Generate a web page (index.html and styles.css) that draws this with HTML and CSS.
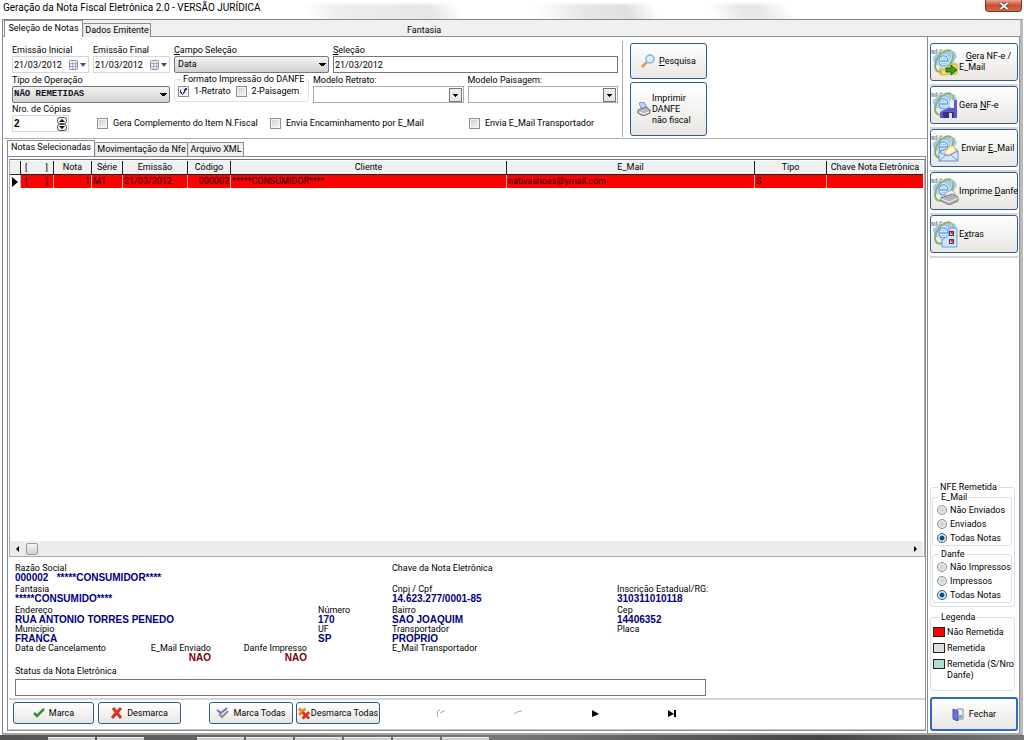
FILE: index.html
```html
<!DOCTYPE html>
<html lang="pt-BR">
<head>
<meta charset="utf-8">
<title>Geração da Nota Fiscal Eletrônica 2.0</title>
<link rel="stylesheet" href="styles.css">
</head>
<body>
<svg class="defs" aria-hidden="true">
  <symbol id="nfe" viewBox="0 0 28 28">
    <path d="M2 9l6-5 5 1 5-3 6 2 2 5-3 4 1 5-4 4-4-1-4 2-4-5-4-2-2-4z" fill="#a2cbf2"/>
    <path d="M1 6V2l2 4V2M5 6V2h2M5 4h2M9 5V2h2v1M13 4h2" stroke="#8a9098" fill="none"/>
    <path d="M9 13h8c0-7-9-7-9 0 0 6 7 6 9 3" fill="none" stroke="#fff" stroke-width="3"/>
    <path d="M9 13h8c0-7-9-7-9 0 0 6 7 6 9 3" fill="none" stroke="#5aa2e2" stroke-width="1.500"/>
    <ellipse cx="13" cy="13" rx="7" ry="12" transform="rotate(35 13 13)" fill="none" stroke="#8db06c" stroke-width="2"/>
    <path d="M20 3c3 4-1 13-9 18" fill="none" stroke="#d8e4c4"/>
  </symbol>
  <symbol id="cal" viewBox="0 0 20 12">
    <rect x="1.500" y="1.500" width="8" height="9" rx="1" fill="#eef" stroke="#8b8fa3"/>
    <path d="M2 4.500h7M2 7.500h7M4.500 3v7M7.500 3v7" stroke="#a9adc2"/>
    <path d="M12 4h6l-3 4z" fill="#35598f"/>
  </symbol>
</svg>
<header class="titlebar">
  <h1 class="title">Geração da Nota Fiscal Eletrônica 2.0 - VERSÃO JURÍDICA</h1>
  <button class="close" aria-label="Fechar janela"><svg width="10" height="8" viewBox="0 0 10 8"><path d="M1.500 1l7 6M8.500 1l-7 6" stroke="#6b2b25" stroke-width="3.500"/><path d="M1.500 1l7 6M8.500 1l-7 6" stroke="#fff" stroke-width="2"/></svg></button>
</header>
<main class="window">
  <nav class="tabs top-tabs">
    <button class="tab active">Seleção de Notas</button>
    <button class="tab">Dados Emitente</button>
    <span class="company">Fantasia</span>
  </nav>
  <div class="page">
    <div class="work">
      <section class="filters">
        <form class="form">
          <div class="row">
            <div class="field date"><label for="ini">Emissão Inicial</label><div class="box soft"><input id="ini" value="21/03/2012"><svg width="20" height="12"><use href="#cal"/></svg></div></div>
            <div class="field date"><label for="fim">Emissão Final</label><div class="box soft"><input id="fim" value="21/03/2012"><svg width="20" height="12"><use href="#cal"/></svg></div></div>
            <div class="field campo"><label for="campo"><u>C</u>ampo Seleção</label><select id="campo" class="combo"><option>Data</option></select></div>
            <div class="field grow"><label for="sel"><u>S</u>eleção</label><div class="box dark"><input id="sel" value="21/03/2012"></div></div>
          </div>
          <div class="row second">
            <div class="field tipo"><label for="tipo">Tipo de Operação</label><select id="tipo" class="combo mono"><option>NÃO REMETIDAS</option></select></div>
            <fieldset class="group formato"><legend>Formato Impressão do DANFE</legend>
              <label class="opt"><input type="checkbox" class="check" checked>1-Retrato</label>
              <label class="opt"><input type="checkbox" class="check">2-Paisagem</label>
            </fieldset>
            <div class="field grow"><label for="mr">Modelo Retrato:</label><select id="mr" class="combo plain"><option></option></select></div>
            <div class="field grow"><label for="mp">Modelo Paisagem:</label><select id="mp" class="combo plain"><option></option></select></div>
          </div>
          <div class="row third">
            <div class="field copias"><label for="cop">Nro. de Cópias</label><div class="box soft"><input id="cop" class="bold" value="2"><svg width="12" height="14" viewBox="0 0 12 14"><rect x="1.500" y=".5" width="9" height="6" rx="2" fill="#eee" stroke="#555"/><rect x="1.500" y="7.500" width="9" height="6" rx="2" fill="#eee" stroke="#555"/><path d="M3 5h6l-3-3zM3 9h6l-3 3z" fill="#111"/></svg></div></div>
            <label class="opt c1"><input type="checkbox" class="check">Gera Complemento do Item N.Fiscal</label>
            <label class="opt c2"><input type="checkbox" class="check">Envia Encaminhamento por E_Mail</label>
            <label class="opt"><input type="checkbox" class="check">Envia E_Mail Transportador</label>
          </div>
        </form>
        <div class="actions">
          <button class="btn search"><svg width="14" height="14" viewBox="0 0 14 14"><path d="M1 13l5-5" stroke="#e59a4a" stroke-width="2.500"/><circle cx="9" cy="5" r="4" fill="#d8f0ff" stroke="#7fb2e2" stroke-width="1.500"/></svg><span><u>P</u>esquisa</span></button>
          <button class="btn print"><svg width="14" height="14" viewBox="0 0 14 14"><path d="M2 1l5-1 3 6-5 2z" fill="#b9d4f8" stroke="#8295c2"/><path d="M1 8l8-3 4 3v3l-7 3-5-3z" fill="#b8bcc2" stroke="#65686e"/><path d="M2 10l5 2 5-2" stroke="#fff" fill="none"/></svg><span>Imprimir<br>DANFE<br>não fiscal</span></button>
        </div>
      </section>
      <nav class="tabs sub-tabs">
        <button class="tab active">Notas Selecionadas</button>
        <button class="tab">Movimentação da Nfe</button>
        <button class="tab">Arquivo XML</button>
      </nav>
      <section class="notes">
        <div class="gridbox">
          <table class="grid">
            <colgroup><col class="w11"><col class="w33"><col class="w38"><col class="w31"><col class="w65"><col class="w43"><col><col class="w248"><col class="w72"><col class="w96"></colgroup>
            <thead><tr><th></th><th><span class="br"><span>[</span><span>]</span></span></th><th>Nota</th><th>Série</th><th>Emissão</th><th>Código</th><th>Cliente</th><th>E_Mail</th><th>Tipo</th><th>Chave Nota Eletrônica</th></tr></thead>
            <tbody><tr><td class="mark"><svg width="6" height="10" viewBox="0 0 6 10"><path d="M0 0l6 5-6 5z"/></svg></td><td><span class="br"><span>[</span><span>]</span></span></td><td class="num">1</td><td>M1</td><td>21/03/2012</td><td class="num">000002</td><td>*****CONSUMIDOR****</td><td>nativashoes@ymail.com</td><td>S</td><td></td></tr></tbody>
          </table>
          <div class="scroll"><svg width="5" height="8" viewBox="0 0 5 8"><path d="M4 1v6L1 4z"/></svg><span class="thumb"></span><svg width="5" height="8" viewBox="0 0 5 8"><path d="M1 1v6l3-3z"/></svg></div>
        </div>
        <div class="details">
          <div class="cell wide3">Razão Social<b>000002 &nbsp; *****CONSUMIDOR****</b></div>
          <div class="cell wide3 col4">Chave da Nota Eletrônica</div>
          <div class="cell wide3">Fantasia<b>*****CONSUMIDO****</b></div>
          <div class="cell col5">Cnpj / Cpf<b>14.623.277/0001-85</b></div>
          <div class="cell">Inscrição Estadual/RG:<b>310311010118</b></div>
          <div class="cell wide3">Endereço<b>RUA ANTONIO TORRES PENEDO</b></div>
          <div class="cell">Número<b>170</b></div>
          <div class="cell">Bairro<b>SAO JOAQUIM</b></div>
          <div class="cell">Cep<b>14406352</b></div>
          <div class="cell wide3">Município<b>FRANCA</b></div>
          <div class="cell">UF<b>SP</b></div>
          <div class="cell">Transportador<b>PROPRIO</b></div>
          <div class="cell">Placa</div>
          <div class="cell">Data de Cancelamento</div>
          <div class="cell end">E_Mail Enviado<b class="no">NAO</b></div>
          <div class="cell end danfe">Danfe Impresso<b class="no">NAO</b></div>
          <div class="cell col5">E_Mail Transportador</div>
        </div>
        <div class="status"><label for="st">Status da Nota Eletrônica</label><div class="box dark"><input id="st"></div></div>
        <div class="toolbar">
          <button class="btn b1"><svg width="12" height="10" viewBox="0 0 12 10"><path d="M1 5l3 3 7-7" fill="none" stroke="#2c9431" stroke-width="2.500"/></svg>Marca</button>
          <button class="btn b2"><svg width="12" height="12" viewBox="0 0 12 12"><path d="M2 1l8 10M10 1L1 11" stroke="#d93120" stroke-width="3"/></svg>Desmarca</button>
          <button class="btn b3"><svg width="13" height="12" viewBox="0 0 13 12"><path d="M1 3l4 3 6-5" fill="none" stroke="#6d70d8" stroke-width="2"/><path d="M3 7l3 3 6-6" fill="none" stroke="#8a8d94" stroke-width="2"/></svg>Marca Todas</button>
          <button class="btn b4"><svg width="12" height="13" viewBox="0 0 13 13"><path d="M1 1l7 8M8 1L1 8" stroke="#ef8a22" stroke-width="3"/><path d="M5 5l7 7M12 5l-7 7" stroke="#d93120" stroke-width="3"/></svg>Desmarca Todas</button>
          <div class="pager">
            <button class="nav" aria-label="Primeiro" disabled><svg width="10" height="9" viewBox="0 0 10 9"><path d="M1.500 8V2M2 1.500h2M4 4l5-2.500" fill="none" stroke="#aaa"/></svg></button>
            <button class="nav" aria-label="Anterior" disabled><svg width="10" height="9" viewBox="0 0 10 9"><path d="M1 5l3-2 5-1" fill="none" stroke="#aaa"/></svg></button>
            <button class="nav" aria-label="Próximo"><svg width="10" height="9" viewBox="0 0 10 9"><path d="M2 1l7 4-7 3z"/></svg></button>
            <button class="nav" aria-label="Último"><svg width="10" height="9" viewBox="0 0 10 9"><path d="M1 1l6 4-6 3zM7 1h2v7H7z"/></svg></button>
          </div>
        </div>
      </section>
    </div>
    <aside class="side">
      <div class="slot"><button class="btn big"><svg width="28" height="28" viewBox="0 0 28 28"><path d="M9 17l7-2 10 1v10l-17 1z" fill="#f7dc62" stroke="#e0b93c"/><use href="#nfe"/><path d="M10 22l5-1 4-4 7-1v10l-15 1z" fill="#f7dc62" stroke="#e0b93c"/><path d="M15 20h5v-3l6 5-6 5v-3h-5z" fill="#3a9d2c" stroke="#1c6817"/></svg><span>&nbsp; &nbsp;<u>G</u>era NF-e /<br>E_Mail</span></button></div>
      <div class="slot"><button class="btn big"><svg width="28" height="28" viewBox="0 0 28 28"><use href="#nfe"/><path d="M19 9h7v18H9v-6l10-5z" fill="#5a5bc6"/><path d="M19 9h4v8h-4z" fill="#e8eaf8"/><path d="M12 21h11v6H12z" fill="#34367c"/><path d="M18 22h3v5h-3z" fill="#dde"/></svg><span>Gera <u>N</u>F-e</span></button></div>
      <div class="slot"><button class="btn big"><svg width="28" height="28" viewBox="0 0 28 28"><use href="#nfe"/><path d="M8 18l14-6 5 5v10H8z" fill="#d8e8fc" stroke="#6e8bd0"/><path d="M19 12h4l2 5-7 4-5-2z" fill="#fff3c4" stroke="#e2c47a"/><path d="M8 18l9 4 10-5M8 27l7-6M27 27l-7-6" fill="none" stroke="#6e8bd0"/></svg><span>&nbsp;Enviar <u>E</u>_Mail</span></button></div>
      <div class="slot"><button class="btn big"><svg width="28" height="28" viewBox="0 0 28 28"><use href="#nfe"/><path d="M14 16l7-3 4 5-9 4z" fill="#eef2f7" stroke="#aaa"/><path d="M10 21l11-4 6 3v4l-9 4-8-4z" fill="#b5b5b5" stroke="#777"/><path d="M10 22l8 3 9-4" fill="none" stroke="#eee"/></svg><span>Imprime <u>D</u>anfe</span></button></div>
      <div class="slot"><button class="btn big"><svg width="28" height="28" viewBox="0 0 28 28"><use href="#nfe"/><path d="M11 20l7-5V8h8v19H11z" fill="#cce4ff" stroke="#6b9ae0"/><path d="M18.500 11.500h4v4h-4zM18.500 19.500h4v4h-4z" fill="#f8ded8" stroke="#333"/><path d="M20 12l2 2M20 20l2 2" stroke="#d52c20" stroke-width="2"/></svg><span>E<u>x</u>tras</span></button></div>
      <fieldset class="group outer"><legend>NFE Remetida</legend>
        <fieldset class="group radios"><legend>E_Mail</legend>
          <label><input type="radio" name="em">Não Enviados</label>
          <label><input type="radio" name="em">Enviados</label>
          <label><input type="radio" name="em" checked>Todas Notas</label>
        </fieldset>
        <fieldset class="group radios"><legend>Danfe</legend>
          <label><input type="radio" name="da">Não Impressos</label>
          <label><input type="radio" name="da">Impressos</label>
          <label><input type="radio" name="da" checked>Todas Notas</label>
        </fieldset>
      </fieldset>
      <fieldset class="group legenda"><legend>Legenda</legend>
        <div class="key"><i class="sw red"></i>Não Remetida</div>
        <div class="key"><i class="sw gray"></i>Remetida</div>
        <div class="key"><i class="sw teal"></i><span>Remetida (S/Nro<br>Danfe)</span></div>
      </fieldset>
      <button class="btn exit"><svg width="12" height="13" viewBox="0 0 12 13"><path d="M5 1h6v10H5z" fill="#eaf2ff" stroke="#7a7fd0"/><path d="M1 1l5 2v10l-5-2z" fill="#6f73d9" stroke="#4a4eb0"/><path d="M7 7h3v3H7z" fill="#7bc24a"/></svg>Fechar</button>
    </aside>
  </div>
</main>
<footer class="taskbar"><i class="task"></i><i class="task"></i><i class="task gap"></i><i class="task"></i><i class="task"></i><i class="task"></i><i class="task"></i><i class="task"></i></footer>
</body>
</html>
```
FILE: styles.css
```css
* { box-sizing: border-box; }
body {
  margin: 0;
  min-height: 100vh;
  display: flex;
  flex-direction: column;
  background: #fff;
  color: #000;
  font: 9px/11px Roboto, "Liberation Sans", sans-serif;
}
button, input, select { font: inherit; color: inherit; margin: 0; }
.defs { position: absolute; width: 0; height: 0; }
.titlebar {
  height: 19px;
  flex: none;
  display: flex;
  justify-content: space-between;
  align-items: flex-start;
  padding-right: 2px;
  background: linear-gradient(#fff 2px, transparent 6px), linear-gradient(60deg, #fff 30%, #eee 33%, #e6e6e6 42%, #fff 45%, #fff 52%, #e6e6e6 57%, #e0e0e0 61%, #fff 64%, #fff 69%, #e8e8e8 72%, #e8e8e8 74%, #fff 77%, #fff 100%);
}
.title { margin: 0; padding: 1px 3px; font: 10px/14px Roboto, "Open Sans", sans-serif; }
.close {
  width: 37px;
  height: 12px;
  padding: 0;
  border: 1px solid #7a3027;
  border-top: 0;
  border-radius: 0 0 4px 4px;
  background: linear-gradient(#e6a796, #cd4c33 50%, #d9694d);
  display: grid;
  place-items: center;
}
.window {
  flex: 1;
  display: flex;
  flex-direction: column;
  margin: 0 1px 0 2px;
  border: 1px solid #85858c;
  border-bottom: 2px solid #a5a5a8;
  border-right: 3px solid #b9b9bc;
}
.tabs { display: flex; align-items: flex-end; flex: none; }
.tab {
  padding: 0;
  border: 1px solid #898c95;
  border-left-color: #ddd;
  border-bottom: 0;
  background: #f0f0f0;
  height: 14px;
  white-space: nowrap;
}
.tab.active { background: #fff; border-left-color: #898c95; }
.top-tabs { height: 17px; background: #f0f0f0; box-shadow: inset 0 -1px #898c95; padding-left: 1px; }
.top-tabs .tab { width: 68px; }
.top-tabs .active { width: 79px; height: 17px; padding-bottom: 2px; }
.company { margin-left: 256px; align-self: center; padding-top: 4px; }
.page { flex: 1; display: flex; border-right: 1px solid #898c95; }
.work { flex: 1; min-width: 0; display: flex; flex-direction: column; padding-left: 1px; }
.filters { display: flex; height: 102px; padding-top: 4px; border-bottom: 1px solid #ababab; }
.form { width: 619px; padding: 4px 4px 0 8px; border-right: 1px solid #aaa; margin-bottom: 1px; }
.row { display: flex; height: 28px; gap: 4px; }
.second { margin-top: 1px; height: 29px; align-items: flex-end; }
.third { margin-top: 1px; height: 30px; }
.field { display: flex; flex-direction: column; white-space: nowrap; }
.date { width: 77px; }
.campo { width: 155px; }
.tipo { width: 158px; }
.grow { flex: 1; }
.box { display: flex; align-items: center; height: 17px; border: 1px solid #d5d5dc; background: #fff; }
.box input { flex: 1; min-width: 0; width: 10px; border: 0; padding: 0 0 0 1px; background: none; outline: 0; height: 13px; }
.dark { border-color: #777; }
.box .bold { font: bold 10px/11px "Liberation Sans", sans-serif; }
.combo {
  appearance: none;
  width: 100%;
  height: 17px;
  padding: 0 3px;
  border: 1px solid #777;
  border-radius: 2px;
  background-image: linear-gradient(#000, #000), linear-gradient(#000, #000), linear-gradient(#000, #000), linear-gradient(#f3f3f3, #d2d2d2);
  background-size: 7px 1px, 5px 1px, 3px 1px, 100% 100%;
  background-position: right 2px top 6px, right 3px top 7px, right 4px top 8px, 0 0;
  background-repeat: no-repeat;
}
.mono { font: bold 9px/11px "Liberation Mono", monospace; color: #112; padding: 0 1px; }
.plain {
  border-color: #aaa;
  border-radius: 0;
  background-image: linear-gradient(#000, #000), linear-gradient(#000, #000), linear-gradient(#000, #000), linear-gradient(#eee, #e4e4e4), linear-gradient(#777, #777);
  background-color: #fff;
  background-size: 5px 1px, 3px 1px, 1px 1px, 11px 12px, 13px 14px;
  background-position: right 5px top 7px, right 6px top 8px, right 7px top 9px, right 2px top 2px, right 1px top 1px;
}
.group { margin: 0; padding: 0; border: 1px solid #d5dfe5; border-radius: 3px; min-width: 0; }
.group legend { padding: 0 2px; margin-left: 6px; white-space: nowrap; }
.formato { width: 135px; height: 28px; padding-left: 3px; display: flex; gap: 5px; margin-bottom: 1px; }
.formato legend { margin-left: 3px; }
.opt { display: flex; align-items: center; gap: 5px; white-space: nowrap; }
.formato .opt { height: 13px; }
.check { appearance: none; width: 11px; height: 11px; flex: none; border: 1px solid #8e8f8f; background: linear-gradient(135deg, #ccd0d4, #f6f6f6); box-shadow: inset 0 0 0 1px #f4f4f4; }
.check:checked { background: conic-gradient(from 20deg at 40% 85%, #31347c 22deg, transparent 0 285deg, #31347c 0 315deg, transparent 0), #e8ebf4; }
.copias { width: 57px; }
.third .opt { padding-top: 8px; }
.c1 { margin-left: 24px; width: 169px; }
.c2 { width: 195px; }
.actions { display: flex; flex-direction: column; gap: 3px; width: 84px; padding: 2px 0 2px 7px; }
.btn {
  display: flex;
  align-items: center;
  justify-content: center;
  gap: 4px;
  padding: 0;
  border: 1px solid #2c5b92;
  border-radius: 3px;
  background: linear-gradient(#fff, #f4f3f1 50%, #e9e6e3);
  white-space: nowrap;
}
.btn svg { flex: none; }
.search { height: 36px; }
.print { height: 54px; text-align: left; justify-content: flex-start; padding-left: 6px; gap: 1px; }
.sub-tabs { height: 16px; margin: 1px 0 0 3px; }
.sub-tabs .tab { width: 93px; }
.sub-tabs .active { width: 88px; height: 16px; padding-bottom: 2px; }
.sub-tabs .tab:last-child { width: 56px; }
.notes { flex: 1; display: flex; flex-direction: column; margin: 0 1px 2px 3px; border: 1px solid #898c95; padding: 2px 0 0 1px; }
.gridbox { flex: 1; display: flex; flex-direction: column; border: 1px solid #aaa; border-top-color: #777; min-height: 380px; padding: 1px 1px 0 0; }
.grid { width: 100%; table-layout: fixed; border-collapse: separate; border-spacing: 0; white-space: nowrap; }
.grid th, .grid td { height: 13px; padding: 0 1px; overflow: hidden; font-weight: normal; text-align: left; border-right: 1px solid #b5b5b5; }
.grid th { background: #f0f0f0; text-align: center; height: 14px; border-right-color: #222; border-bottom: 1px solid #222; }
.grid th:last-child, .grid td:last-child { border-right: 0; }
.grid td { background: #f00; color: #100000; }
.grid td.mark { background: #fff; padding: 0 2px; }
.grid .num { text-align: right; }
.mark svg { display: block; }
.br { display: flex; justify-content: space-between; padding: 0 4px 0 3px; }
.w11 { width: 11px; } .w33 { width: 33px; } .w38 { width: 38px; } .w31 { width: 31px; } .w65 { width: 65px; }
.w43 { width: 43px; } .w248 { width: 248px; } .w72 { width: 72px; } .w96 { width: 96px; }
.scroll { margin-top: auto; height: 15px; display: flex; align-items: center; gap: 6px; padding: 0 5px; background: #ececec; }
.thumb { width: 12px; height: 12px; border: 1px solid #999; border-radius: 2px; background: linear-gradient(#f5f5f5, #d0d0d0); margin-right: auto; }
.details {
  display: grid;
  grid-template-columns: 130px 66px 107px 74px 225px 1fr;
  grid-template-rows: 21px 21px 19px 19px 23px;
  padding: 6px 0 0 6px;
  line-height: 10px;
}
.cell { white-space: nowrap; }
.cell b { display: block; font: bold 10px/9px "Liberation Sans", sans-serif; color: #000080; }
.cell .no { color: #800000; }
.wide3 { grid-column: 1 / span 3; }
.col4 { grid-column: 5 / span 2; }
.col5 { grid-column: 5; }
.end { text-align: right; }
.danfe { padding-right: 11px; }
.status { width: 697px; padding: 0 0 2px 6px; }
.status label { display: block; height: 13px; }
.toolbar { display: flex; padding: 2px 0 5px 4px; border-top: 2px solid #d5d5d5; border-bottom: 1px solid #c8c8c8; }
.toolbar .btn { height: 22px; }
.b1 { width: 81px; margin-right: 4px; }
.b2 { width: 83px; margin-right: 28px; }
.b3 { width: 84px; margin-right: 3px; }
.toolbar .b4 { width: 84px; gap: 1px; }
.pager { display: flex; margin-left: 22px; }
.nav { width: 77px; border: 0; background: none; padding: 0; display: grid; place-items: center; }
.side { width: 92px; display: flex; flex-direction: column; border-left: 1px solid #888; padding: 6px 1px 0 2px; }
.slot { height: 43px; border-bottom: 2px solid #d5d5d5; }
.big { width: 100%; height: 38px; justify-content: flex-start; gap: 0; text-align: left; }
.outer { margin: auto 3px 0 0; padding: 0 2px 3px 1px; height: 125px; }
.outer > legend { height: 10px; }
.radios { height: 54px; }
.radios + .radios { margin-top: 3px; }
.radios label { display: flex; align-items: center; height: 14px; gap: 3px; padding-left: 4px; white-space: nowrap; }
.radios input { appearance: none; width: 10px; height: 10px; flex: none; border: 1px solid #8e8f8f; border-radius: 50%; background: radial-gradient(#ccc, #f8f8f8); }
.radios input:checked { border-color: #385f7c; background: radial-gradient(#0b4d85 35%, #d8e6f0 50%); }
.legenda { height: 79px; margin: 5px 3px 6px 0; padding: 2px 0 0 2px; }
.key { display: flex; gap: 2px; height: 16px; align-items: flex-start; padding-top: 2px; white-space: nowrap; }
.sw { width: 12px; height: 10px; flex: none; border: 1px solid #222; }
.red { background: #f00; }
.gray { background: #ddd; }
.teal { background: #b0dcd8; }
.exit { height: 34px; border: 2px solid #3068c8; margin-bottom: 2px; gap: 5px; }
.taskbar { height: 5px; flex: none; display: flex; gap: 2px; padding: 2px 0 0 48px; background: linear-gradient(90deg, #555, #777 50%, #444 80%, #777); }
.task { width: 47px; height: 3px; background: #ccc; border-top: 1px solid #eee; }
.task.gap { margin-left: 51px; }
```
